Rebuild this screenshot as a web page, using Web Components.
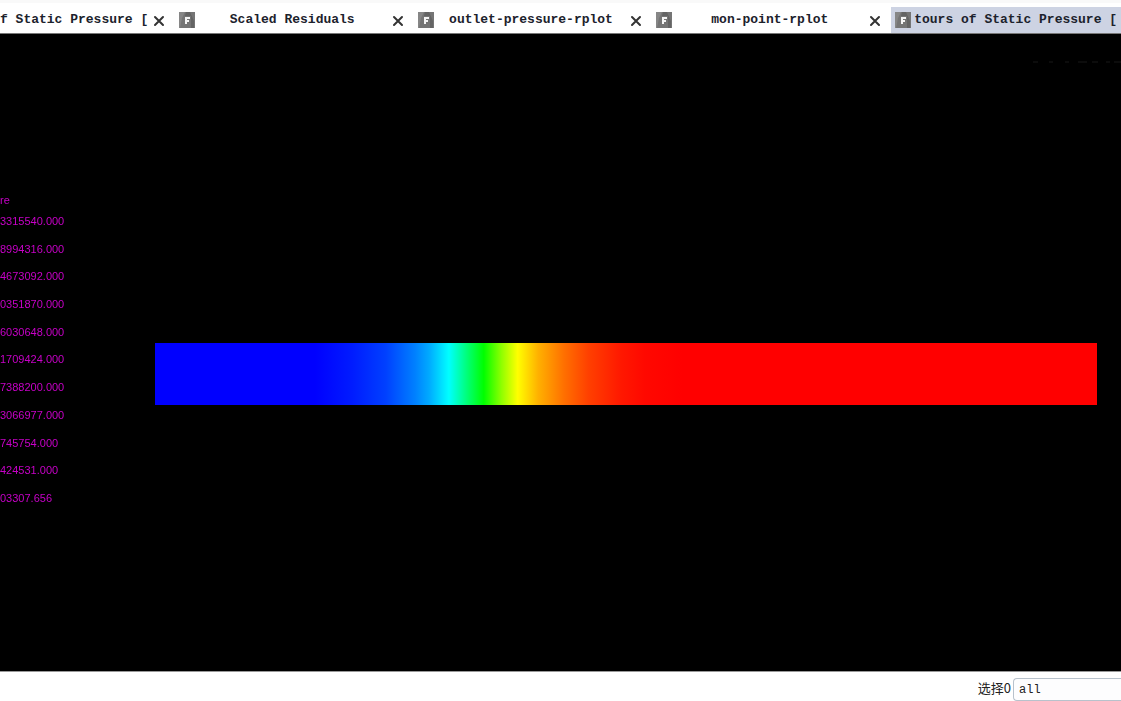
<!DOCTYPE html>
<html lang="zh-CN">
<head>
<meta charset="utf-8">
<title>Contours of Static Pressure</title>
<style>
html, body { height: 100%; margin: 0; }
body { overflow: hidden; background: #fff; font-family: "Liberation Mono", "Noto Sans CJK SC", monospace; }
</style>
</head>
<body>
<plot-window></plot-window>
<script>
class PlotTab extends HTMLElement {
  connectedCallback() {
    const root = this.attachShadow({ mode: 'open' });
    root.innerHTML = `
      <style>
        :host { display: flex; align-items: center; min-width: 0; box-sizing: border-box; padding: 0 8px 0 4px; overflow: hidden; color: #1c222c; }
        :host([active]) { background: #cdd3e3; }
        :host([start]) { padding-left: 0; }
        :host([end]) { padding-right: 0; }
        svg { display: block; flex: none; }
        .title { flex: 1; min-width: 0; border: 0; padding: 0; background: none; color: inherit; font: bold 13px/24px "Liberation Mono", monospace; text-align: center; white-space: pre; overflow: hidden; }
        :host([start]) .title { text-align: left; }
        :host([end]) .title { text-align: left; padding-left: 3px; }
        .close { flex: none; border: 0; padding: 0; background: none; color: #333; }
        :host([start]) .icon, :host([end]) .close { display: none; }
      </style>
      <svg class="icon" width="16" height="16" viewBox="0 0 16 16" aria-hidden="true">
        <path fill="#757575" d="M0 0h16v16H0z"/>
        <path fill="#868686" d="M0 0h6L3 6 1 16H0z"/>
        <path fill="#646464" d="M7 0h4l4 9v7h-3V4H6z"/>
        <path fill="#f5f5f5" d="M6 5h5v2H8v1h2v2H8v2H6z"/>
      </svg>
      <button class="title" type="button"><slot></slot></button>
      <button class="close" type="button" aria-label="Close">
        <svg width="16" height="16" viewBox="0 0 16 16"><path d="M4 5l8 8M12 5l-8 8" stroke="currentColor" stroke-width="2" stroke-linecap="round"/></svg>
      </button>`;
  }
}
customElements.define('plot-tab', PlotTab);

class TabStrip extends HTMLElement {
  connectedCallback() {
    this.attachShadow({ mode: 'open' }).innerHTML = `
      <style>
        :host { display: grid; grid-template-columns: 175fr repeat(3, 239fr) 230fr; flex: none; height: 26px; border-top: 7px solid #f9f9f9; border-bottom: 1px solid #777; background: #fff; }
        :host { border-top: 3px solid #f9f9f9; padding-top: 4px; }
      </style><slot></slot>`;
  }
}
customElements.define('tab-strip', TabStrip);

class ColorLegend extends HTMLElement {
  connectedCallback() {
    const rows = this.getAttribute('values').split(' ').map(v => `<li>${v}</li>`).join('');
    this.attachShadow({ mode: 'open' }).innerHTML = `
      <style>
        :host { display: block; will-change: transform; padding-top: 159px; color: #c800c8; font: 11px/14px "Liberation Sans", Arial, sans-serif; }
        h2 { margin: 0; font: inherit; }
        ol { list-style: none; margin: 0; padding: 0; height: 305px; display: grid; grid-auto-rows: 1fr; align-items: center; }
      </style>
      <h2><slot></slot></h2><ol>${rows}</ol>`;
  }
}
customElements.define('color-legend', ColorLegend);

class ContourPlot extends HTMLElement {
  connectedCallback() {
    this.attachShadow({ mode: 'open' }).innerHTML = `
      <style>
        :host { position: relative; flex: 1; min-height: 0; display: grid; grid-template-columns: 155px 1fr; padding-right: 24px; background: #000; overflow: hidden; }
        .trace { position: absolute; top: 27px; right: 0; }
        .field { height: 62px; margin-top: 309px;
          background: linear-gradient(90deg, #00f 0, #00f 17%, #001cff 21%, #0040ff 24.5%, #0080ff 27.6%, #0af 29.1%, #0ff 31.2%, #00ff80 33%, #0f0 34.9%, #90ff00 36.8%, #ff0 38.5%, #ffb000 40.7%, #ff7000 43.4%, #ff4000 46%, #ff1800 49.5%, #ff0800 52%, #f00 56%); }
      </style>
      <slot></slot>
      <div class="field" role="img" aria-label="Static pressure contour"></div>
      <svg class="trace" width="90" height="2" aria-hidden="true"><path d="M2 1h5M18 1h4M34 1h4M47 1h9M61 1h6M75 1h4M83 1h7" stroke="#181818"/></svg>`;
  }
}
customElements.define('contour-plot', ContourPlot);

class SelectionBar extends HTMLElement {
  connectedCallback() {
    this.attachShadow({ mode: 'open' }).innerHTML = `
      <style>
        :host { display: flex; flex: none; justify-content: flex-end; align-items: flex-start; gap: 2px; height: 23px; padding-top: 6px; border-top: 1px solid #999; background: #fff; color: #222; overflow: hidden; }
        label { font: 13px/20px "Noto Sans CJK SC", sans-serif; }
        select { appearance: none; box-sizing: border-box; width: 108px; height: 23px; margin: 0; padding: 0 5px; border: 1px solid #b8c2cc; border-right: 0; border-radius: 4px 0 0 4px; background: #fdfdfe; color: #222; font: 12px/20px "Liberation Mono", monospace; }
      </style>
      <label for="sel">选择0</label>
      <select id="sel"><option>all</option></select>`;
  }
}
customElements.define('selection-bar', SelectionBar);

class PlotWindow extends HTMLElement {
  connectedCallback() {
    this.attachShadow({ mode: 'open' }).innerHTML = `
      <style>:host { display: flex; flex-direction: column; height: 100vh; }</style>
      <tab-strip>
        <plot-tab start>f Static Pressure [</plot-tab>
        <plot-tab>Scaled Residuals</plot-tab>
        <plot-tab>outlet-pressure-rplot</plot-tab>
        <plot-tab>mon-point-rplot</plot-tab>
        <plot-tab active end>tours of Static Pressure [</plot-tab>
      </tab-strip>
      <contour-plot>
        <color-legend values="3315540.000 8994316.000 4673092.000 0351870.000 6030648.000 1709424.000 7388200.000 3066977.000 745754.000 424531.000 03307.656">re</color-legend>
      </contour-plot>
      <selection-bar></selection-bar>`;
  }
}
customElements.define('plot-window', PlotWindow);
</script>
</body>
</html>
